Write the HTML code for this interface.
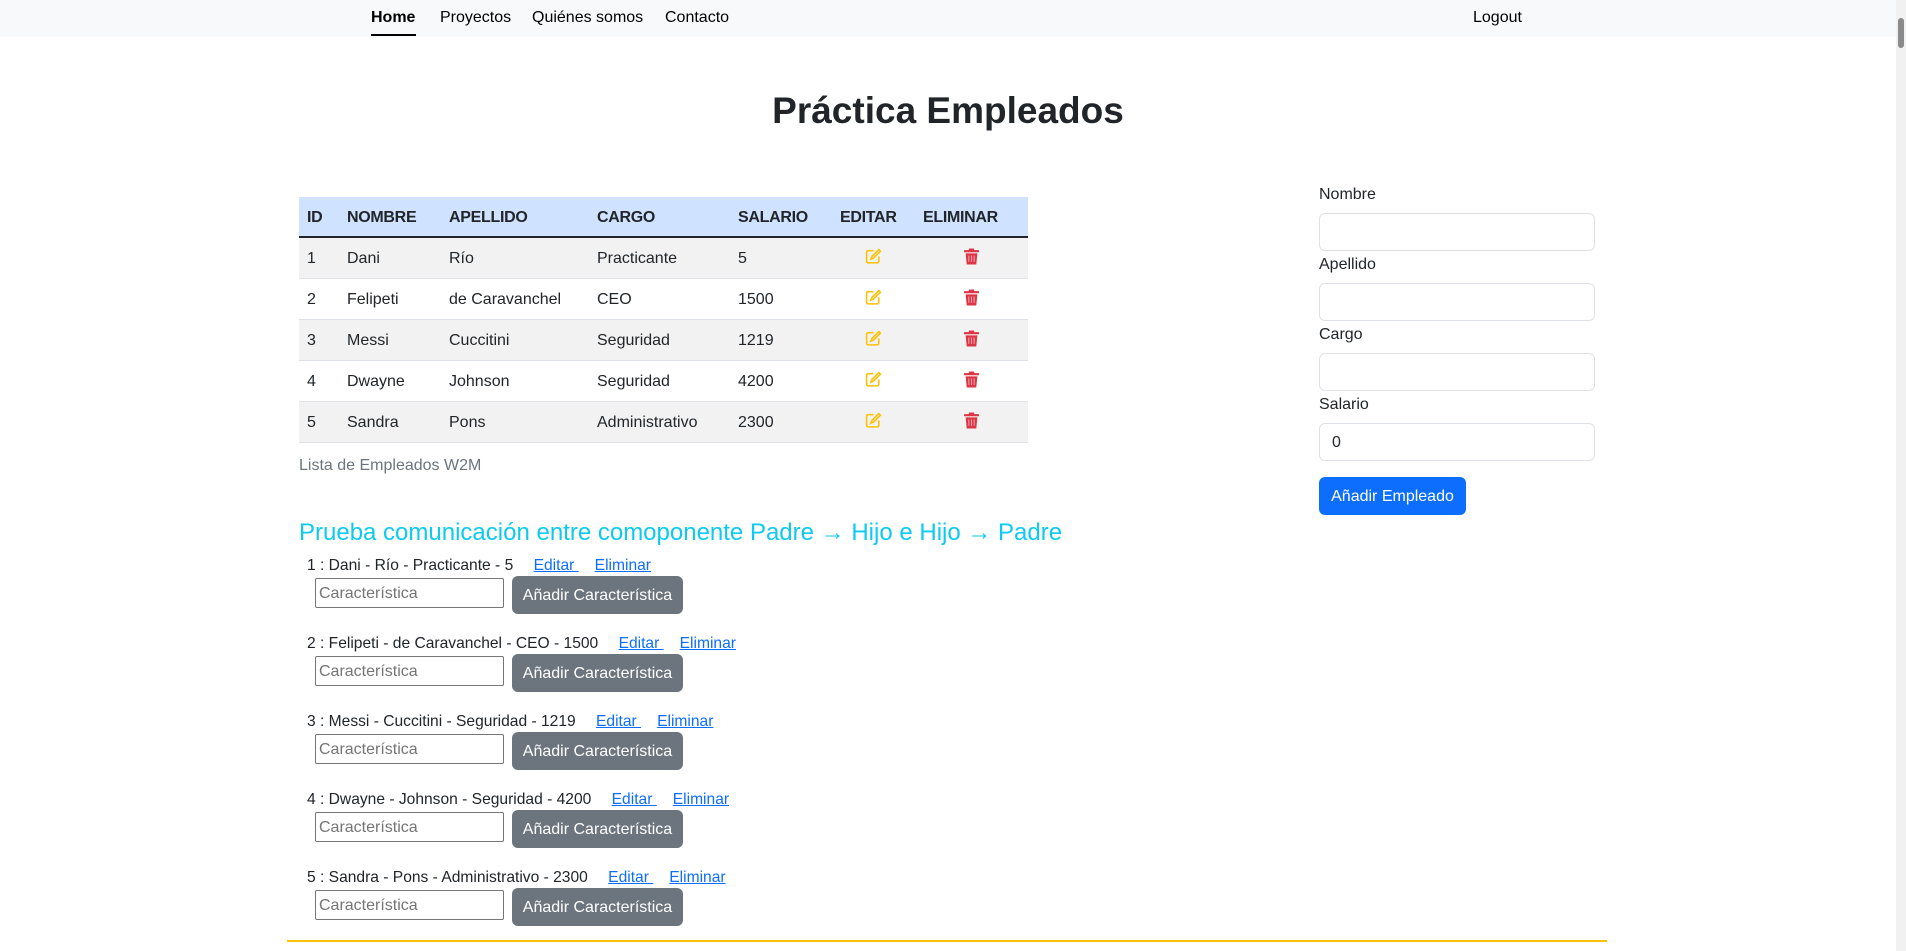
<!DOCTYPE html>
<html><head><meta charset="utf-8"><style>
*{box-sizing:border-box;margin:0;padding:0}
body{width:1906px;height:951px;overflow:hidden;background:#fff;font-family:"Liberation Sans",sans-serif;color:#212529;font-size:16px;position:relative}
.a{position:absolute;white-space:nowrap}
.nav{position:absolute;left:0;top:0;width:1896px;height:37px;background:#f8f9fa}
.nav span{position:absolute;top:9px;font-size:16px;color:#000}
.sb{position:absolute;left:1896px;top:0;width:10px;height:951px;background:#f1f1f1}
.sb i{position:absolute;left:2px;top:18px;width:6px;height:30px;background:#8a8a8a;border-radius:3px}
table{position:absolute;left:299px;top:197px;width:729px;border-collapse:collapse;font-size:16px}
th{background:#cfe2ff;height:40px;text-align:left;padding:3px 8px 0;font-weight:bold;border-bottom:2px solid #212529;letter-spacing:-0.3px}
td{height:41px;padding:3px 8px 0;border-bottom:1px solid #dee2e6}
tr.s td{background:#f2f2f2}
.c{text-align:center}
label{position:absolute;left:1319px;font-size:16px}
.inp{position:absolute;left:1319px;width:276px;height:38px;border:1px solid #dee2e6;border-radius:6px;padding:10px 12px 6px}
.it{position:absolute;left:307px;font-size:15.6px}
.it a{color:#0d6efd;text-decoration:underline;margin-left:16px}
.ci{position:absolute;left:315px;width:189px;height:30px;border:1px solid #767676;border-radius:2px;color:#757575;padding:6px 3px 2px;font-size:16px}
.cb{position:absolute;left:512px;width:171px;height:38px;background:#6c757d;color:#fff;border-radius:6px;font-size:16px;text-align:center;line-height:40px}
</style></head><body>
<div class="nav">
<span style="left:371px;font-weight:bold">Home</span>
<div class="a" style="left:371px;top:34px;width:45px;height:2px;background:#000"></div>
<span style="left:440px">Proyectos</span>
<span style="left:532px">Quiénes somos</span>
<span style="left:665px">Contacto</span>
<span style="left:1473px">Logout</span>
</div>
<div class="sb"><i></i></div>
<div class="a" style="left:0;width:1896px;top:90px;text-align:center;font-size:37px;font-weight:bold">Práctica Empleados</div>
<table>
<tr><th style="width:40px">ID</th><th style="width:102px">NOMBRE</th><th style="width:148px">APELLIDO</th><th style="width:141px">CARGO</th><th style="width:102px">SALARIO</th><th style="width:83px">EDITAR</th><th>ELIMINAR</th></tr>
<tr class="s"><td>1</td><td>Dani</td><td>Río</td><td>Practicante</td><td>5</td><td class="c">ED</td><td class="c">TR</td></tr>
<tr><td>2</td><td>Felipeti</td><td>de Caravanchel</td><td>CEO</td><td>1500</td><td class="c">ED</td><td class="c">TR</td></tr>
<tr class="s"><td>3</td><td>Messi</td><td>Cuccitini</td><td>Seguridad</td><td>1219</td><td class="c">ED</td><td class="c">TR</td></tr>
<tr><td>4</td><td>Dwayne</td><td>Johnson</td><td>Seguridad</td><td>4200</td><td class="c">ED</td><td class="c">TR</td></tr>
<tr class="s"><td>5</td><td>Sandra</td><td>Pons</td><td>Administrativo</td><td>2300</td><td class="c">ED</td><td class="c">TR</td></tr>
</table>
<div class="a" style="left:299px;top:457px;color:#6c757d">Lista de Empleados W2M</div>
<div class="a" style="left:299px;top:519px;font-size:24px;color:#0dcaf0">Prueba comunicación entre comoponente Padre → Hijo e Hijo → Padre</div>

<label style="top:186px">Nombre</label><div class="inp" style="top:213px"></div>
<label style="top:256px">Apellido</label><div class="inp" style="top:283px"></div>
<label style="top:326px">Cargo</label><div class="inp" style="top:353px"></div>
<label style="top:396px">Salario</label><div class="inp" style="top:423px">0</div>
<div class="a" style="left:1319px;top:477px;width:147px;height:38px;background:#0d6efd;color:#fff;border-radius:6px;text-align:center;line-height:40px">Añadir Empleado</div>

<div class="it" style="top:557px">1 : Dani - Río - Practicante - 5 <a>Editar </a><a>Eliminar</a></div>
<div class="ci" style="top:578px">Característica</div><div class="cb" style="top:576px">Añadir Característica</div>
<div class="it" style="top:635px">2 : Felipeti - de Caravanchel - CEO - 1500 <a>Editar </a><a>Eliminar</a></div>
<div class="ci" style="top:656px">Característica</div><div class="cb" style="top:654px">Añadir Característica</div>
<div class="it" style="top:713px">3 : Messi - Cuccitini - Seguridad - 1219 <a>Editar </a><a>Eliminar</a></div>
<div class="ci" style="top:734px">Característica</div><div class="cb" style="top:732px">Añadir Característica</div>
<div class="it" style="top:791px">4 : Dwayne - Johnson - Seguridad - 4200 <a>Editar </a><a>Eliminar</a></div>
<div class="ci" style="top:812px">Característica</div><div class="cb" style="top:810px">Añadir Característica</div>
<div class="it" style="top:869px">5 : Sandra - Pons - Administrativo - 2300 <a>Editar </a><a>Eliminar</a></div>
<div class="ci" style="top:890px">Característica</div><div class="cb" style="top:888px">Añadir Característica</div>
<div class="a" style="left:287px;top:940px;width:1320px;height:2px;background:#ffc107"></div>
<script>
document.querySelectorAll('td.c').forEach(function(t){
if(t.textContent=='ED')t.innerHTML='<svg width="17" height="17" viewBox="0 0 16 16" fill="none" stroke="#ffc107" stroke-width="1.5"><path d="M8 2.5H3a1.5 1.5 0 0 0-1.5 1.5v8.5A1.5 1.5 0 0 0 3 14h8.5a1.5 1.5 0 0 0 1.5-1.5V8"/><path d="M13 1.5l1.5 1.5L8 9.5 5.5 10.5 6.5 8z"/></svg>';
else t.innerHTML='<svg width="15" height="17" viewBox="0 0 14 16"><rect x="0" y="2" width="14" height="2" fill="#dc3545"/><rect x="4.5" y="0.5" width="5" height="2" fill="#dc3545"/><path d="M1.5 5h11l-1 10.5h-9z" fill="#dc3545"/><path d="M4.5 7v6M7 7v6M9.5 7v6" stroke="#f0a0a8" stroke-width="1"/></svg>';
});
</script>
</body></html>
